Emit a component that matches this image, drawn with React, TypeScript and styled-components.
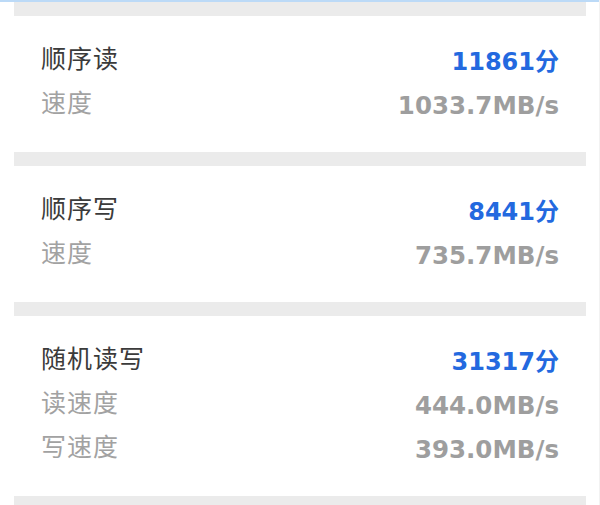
import styled, { createGlobalStyle } from 'styled-components';

type TMetric = {
  label: string;
  value: string;
};

type TTest = {
  title: string;
  score: string;
  metrics: TMetric[];
};

const tests: TTest[] = [
  {
    title: '顺序读',
    score: '11861分',
    metrics: [{ label: '速度', value: '1033.7MB/s' }],
  },
  {
    title: '顺序写',
    score: '8441分',
    metrics: [{ label: '速度', value: '735.7MB/s' }],
  },
  {
    title: '随机读写',
    score: '31317分',
    metrics: [
      { label: '读速度', value: '444.0MB/s' },
      { label: '写速度', value: '393.0MB/s' },
    ],
  },
];

const GlobalStyle = createGlobalStyle`
  html, body {
    margin: 0;
    padding: 0;
    background: #ffffff;
  }

  body {
    font-family: "Noto Sans CJK SC", "Noto Sans", sans-serif;
  }
`;

export default function App() {
  return (
    <>
      <GlobalStyle />
      <Page>
        <TopLine />
        <List>
          <Separator />
          {tests.map((test) => (
            <div key={test.title}>
              <Card>
                <Row>
                  <Title>{test.title}</Title>
                  <Score>{test.score}</Score>
                </Row>
                {test.metrics.map((m) => (
                  <Row key={m.label}>
                    <Label>{m.label}</Label>
                    <Value>{m.value}</Value>
                  </Row>
                ))}
              </Card>
              <Separator />
            </div>
          ))}
        </List>
      </Page>
    </>
  );
}

const Page = styled.div`
  width: 600px;
  height: 505px;
  overflow: hidden;
  background: #ffffff;
  border-right: 1px solid #f2f2f2;
  box-sizing: border-box;
`;

const TopLine = styled.div`
  height: 2px;
  background: #bcdaf7;
`;

const List = styled.div`
  display: flex;
  flex-direction: column;
  margin: 0 13px 0 14px;
`;

const Separator = styled.div`
  height: 14px;
  background: #ebebeb;
`;

const Card = styled.div`
  display: flex;
  flex-direction: column;
  padding: 19px 27px 29px 27px;
  background: #ffffff;
`;

const Row = styled.div`
  display: flex;
  justify-content: space-between;
  align-items: center;
  height: 44px;
`;

const Title = styled.span`
  font-size: 25px;
  letter-spacing: 1px;
  color: #3b3b3b;
`;

const Label = styled(Title)`
  color: #a2a2a2;
`;

const Score = styled.span`
  font-family: "DejaVu Sans", "Noto Sans CJK SC", sans-serif;
  font-weight: bold;
  font-size: 24px;
  color: #2369df;
  padding-top: 4px;
`;

const Value = styled(Score)`
  color: #9e9e9e;
  font-size: 24.5px;
  padding-top: 8px;
`;
